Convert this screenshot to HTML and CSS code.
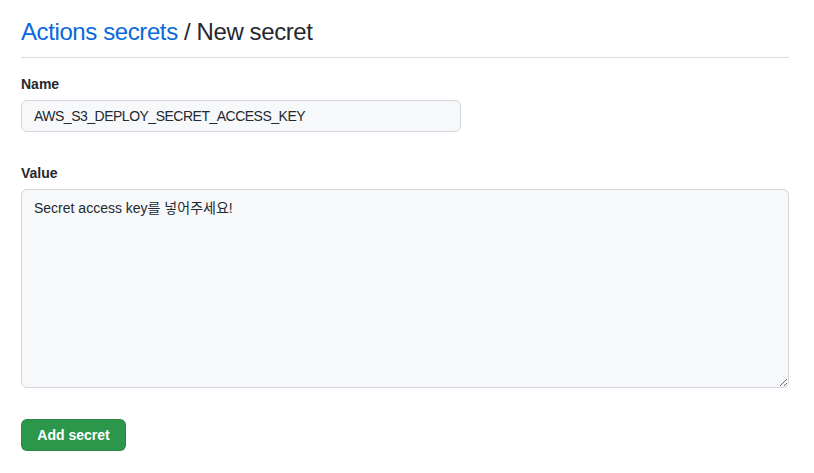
FILE: index.html
```html
<!DOCTYPE html>
<html lang="ko">
<head>
<meta charset="utf-8">
<title>New secret</title>
<link rel="stylesheet" href="styles.css">
</head>
<body>
<main class="page">
  <h2 class="subhead"><a class="crumb" href="#">Actions secrets</a> / New secret</h2>
  <form class="secret-form">
    <div class="form-group">
      <label class="label" for="name">Name</label>
      <input class="input input-name" id="name" type="text" value="AWS_S3_DEPLOY_SECRET_ACCESS_KEY">
    </div>
    <div class="form-group form-group-value">
      <label class="label" for="value">Value</label>
      <textarea class="input textarea" id="value">Secret access key를 넣어주세요!</textarea>
    </div>
    <button class="btn-primary" type="button">Add secret</button>
  </form>
</main>
</body>
</html>
```
FILE: styles.css
```css
* { box-sizing: border-box; }
html, body { margin: 0; padding: 0; background: #ffffff; }
body {
  font-family: "Liberation Sans", Arial, "Noto Sans CJK KR", sans-serif;
  color: #24292f;
  font-size: 14px;
  line-height: 1.5;
}
.page {
  width: 768px;
  margin-left: 21px;
  padding-top: 14px;
}
.subhead {
  margin: 0;
  font-size: 24px;
  font-weight: 400;
  line-height: 36px;
  letter-spacing: -0.4px;
  padding-bottom: 7px;
  border-bottom: 1px solid #d8dee4;
}
.crumb { color: #0969da; text-decoration: none; }
.secret-form { display: flex; flex-direction: column; align-items: flex-start; }
.form-group { display: flex; flex-direction: column; margin-top: 16px; width: 100%; }
.form-group-value { margin-top: 31px; }
.label {
  font-weight: 700;
  font-size: 14px;
  line-height: 21px;
  margin-bottom: 5px;
}
.input {
  font-family: "Liberation Sans", Arial, "Noto Sans CJK KR", sans-serif;
  font-size: 14px;
  line-height: 20px;
  color: #24292f;
  background: #f6f8fa;
  border: 1px solid #d0d7de;
  border-radius: 6px;
  padding: 5px 12px;
  outline: none;
}
.input-name { width: 440px; height: 32px; letter-spacing: -0.5px; }
.textarea {
  width: 768px;
  height: 199px;
  padding: 8px 12px;
  resize: vertical;
}
.btn-primary {
  margin-top: 31px;
  height: 32px;
  width: 105px;
  padding: 0;
  white-space: nowrap;
  background: #2c974b;
  color: #ffffff;
  border: 1px solid rgba(27,31,36,0.15);
  border-radius: 6px;
  font-family: "Liberation Sans", Arial, sans-serif;
  font-size: 14px;
  font-weight: 700;
  line-height: 20px;
  cursor: pointer;
}
```
